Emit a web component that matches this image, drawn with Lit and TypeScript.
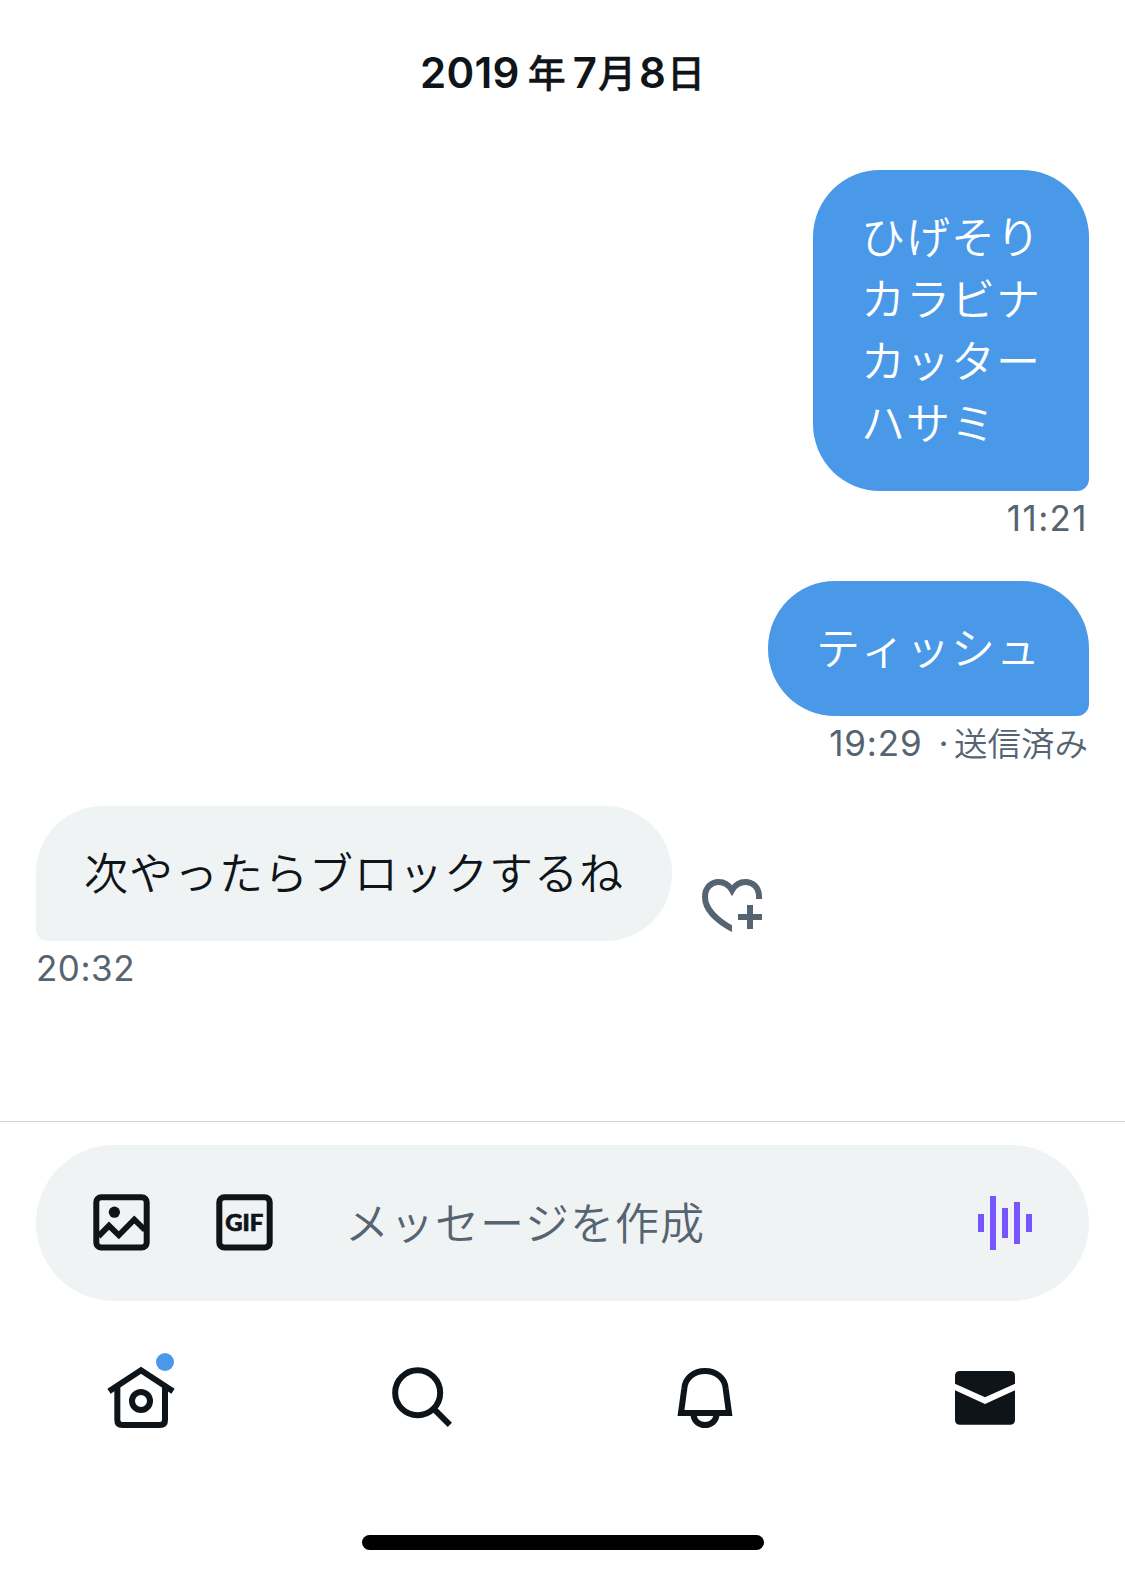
import { LitElement, html, css, svg } from "lit";
import { customElement } from "lit/decorators.js";

const imageIcon = html`<svg class="icon57" viewBox="0 0 57 57" fill="none">
  <rect x="3.3" y="3.2" width="50.4" height="50.4" rx="5" stroke="#0f1419" stroke-width="6" />
  <path d="M5.4 42.4L16 31.6L25.8 41.2L41.3 25.5L52 36" stroke="#0f1419" stroke-width="5.8" />
  <circle cx="21.4" cy="18.2" r="5.6" fill="#0f1419" />
</svg>`;

const gifIcon = html`<svg class="icon57" viewBox="0 0 57 57" fill="none">
  <rect x="3.3" y="3.2" width="50.4" height="50.4" rx="5" stroke="#0f1419" stroke-width="6" />
  <text class="gif" x="9.3" y="36.7" textLength="38" lengthAdjust="spacingAndGlyphs">GIF</text>
</svg>`;

const voiceIcon = html`<svg class="voice" viewBox="0 0 54 54" fill="#7856ff">
  <rect x="0" y="18" width="6" height="18" />
  <rect x="12" y="0" width="6" height="54" />
  <rect x="24" y="12" width="6" height="30" />
  <rect x="36" y="6" width="6" height="42" />
  <rect x="48" y="18" width="6" height="18" />
</svg>`;

const heartIcon = html`<svg class="heart" viewBox="0 0 61 54" fill="none">
  <clipPath id="heart-clip"><path d="M0 0H61V20H30V54H0Z" /></clipPath>
  <path clip-path="url(#heart-clip)" stroke="#566370" stroke-width="6"
    d="M57 22V17.5C57 8 50.5 3 43.5 3C38 3 33 6 30 11.2C27 6 22 3 16.500 3C9.500 3 3 8.500 3 18C3 29 13 41 33 51.300" />
  <path fill="#566370" d="M45 26h6v9h9v6h-9v9h-6v-9h-9v-6h9z" />
</svg>`;

const navShapes = [
  svg`<g fill="none" stroke="#0f1419" stroke-width="18">
      <path d="M57 153.500L153 91L249 153.500" />
      <path d="M82 138V240Q82 255 97 255H210Q225 255 225 240V138" />
      <circle cx="153" cy="183" r="27" />
    </g><circle cx="225" cy="66" r="27" fill="#4a99e9" />`,
  svg`<g fill="none" stroke="#0f1419" stroke-width="18">
      <circle cx="140" cy="158" r="67.500" />
      <path d="M187 205L236.500 254.500" />
    </g>`,
  svg`<g fill="none" stroke="#0f1419" stroke-width="18">
      <path d="M87 219L97 145C100 112 127 93 159 93C191 93 218 112 221 145L231 219Z" />
      <path d="M124.500 226C128 245 142 255 159 255C176 255 190 245 193.500 226" />
    </g>`,
  svg`<path fill="#0f1419" d="M81 93H231Q246 93 246 108V131L156 172L66 131V108Q66 93 81 93Z" />
    <path fill="#0f1419" d="M66 151L156 192L246 151V239Q246 254 231 254H81Q66 254 66 239Z" />`,
];

@customElement("app-root")
export class AppRoot extends LitElement {
  static styles = css`
    :host {
      display: flex;
      flex-direction: column;
      box-sizing: border-box;
      width: 1125px;
      height: 1573px;
      overflow: hidden;
      background: #fff;
      color: #0f1419;
      font-family: Inter, "Noto Sans CJK JP", sans-serif;
    }
    svg { display: block; flex: none; overflow: visible; }
    .date {
      display: flex;
      justify-content: center;
      height: 100px;
      padding-top: 43px;
      box-sizing: border-box;
      margin-bottom: 70px;
      font-size: 42px;
      line-height: 60px;
      font-weight: 600;
      white-space: nowrap;
    }
    .digits { letter-spacing: 0.3px; }
    .kanji {
      height: 60px;
      line-height: 56px;
      font-family: "Noto Sans CJK JP", sans-serif;
      font-weight: 500;
      font-size: 38px;
      -webkit-text-stroke: 0.4px #0f1419;
    }
    .kanji-year { margin: 0 7px 0 8px; }
    .kanji-month { margin: 0 3px 0 1px; }
    .kanji-day { margin-left: 1px; }
    .thread {
      display: flex;
      flex-direction: column;
      height: 951px;
      padding: 0 36px;
    }
    .message { display: flex; flex-direction: column; }
    .sent { align-items: flex-end; }
    .received { align-items: flex-start; }
    .row { display: flex; align-items: flex-end; gap: 30px; }
    .bubble {
      box-sizing: border-box;
      padding: 34px 48px 39px;
      font-family: "Noto Sans CJK JP", sans-serif;
      font-weight: 350;
      font-size: 44px;
      font-kerning: none;
      letter-spacing: 1px;
      line-height: 62px;
      white-space: pre;
    }
    .sent .bubble { background: #4a99e9; color: #fff; border-radius: 67px 67px 12px 67px; }
    .received .bubble { background: #eff3f4; border-radius: 67px 67px 67px 12px; }
    .meta {
      display: flex;
      height: 90px;
      box-sizing: border-box;
      padding-top: 3px;
      font-size: 35px;
      line-height: 48px;
      letter-spacing: 0.5px;
      color: #566370;
      white-space: pre;
    }
    .wide { letter-spacing: 1.4px; }
    .medium { letter-spacing: 0.8px; }
    .sent .meta { padding-right: 1px; }
    .status {
      font-family: "Noto Sans CJK JP", sans-serif;
      font-weight: 350;
      font-size: 33.5px;
      line-height: 46px;
      letter-spacing: 0;
    }
    .dot { margin: 0 5px 0 16px; }
    .heart { width: 61px; height: 54px; margin-bottom: 8px; }
    .composer-area { border-top: 1px solid #cbd6db; padding: 23px 36px 0; }
    .composer {
      display: flex;
      align-items: center;
      box-sizing: border-box;
      height: 156px;
      border-radius: 78px;
      background: #eff3f4;
      padding: 0 57px;
    }
    .icon57 { width: 57px; height: 57px; margin: 0 66px 2px 0; }
    .gif {
      font-family: Lato, sans-serif;
      font-weight: 900;
      font-size: 23.5px;
      fill: #0f1419;
      stroke: #0f1419;
      stroke-width: 0.7px;
    }
    .placeholder {
      flex: 1;
      margin: 0 0 4px 6px;
      font-family: "Noto Sans CJK JP", sans-serif;
      font-weight: 350;
      font-size: 44px;
      font-kerning: none;
      letter-spacing: 1px;
      line-height: 62px;
      color: #566370;
    }
    .voice { width: 54px; height: 54px; }
    .nav { display: flex; gap: 181px; padding: 39px 0 0 90px; }
    .nav-icon { width: 100px; height: 100px; }
    .home-bar {
      align-self: center;
      width: 402px;
      height: 15px;
      margin-top: 95px;
      border-radius: 8px;
      background: #000;
    }
  `;

  render() {
    return html`
      <div class="date">
        <span class="digits">2019</span><span class="kanji kanji-year">年</span><span>7</span
        ><span class="kanji kanji-month">月</span><span>8</span><span class="kanji kanji-day">日</span>
      </div>
      <div class="thread">
        <div class="message sent">
          <div class="bubble">${"ひげそり\nカラビナ\nカッター\nハサミ"}</div>
          <div class="meta"><span class="wide">11:21</span></div>
        </div>
        <div class="message sent">
          <div class="bubble">ティッシュ</div>
          <div class="meta"><span class="medium">19:29</span><span class="dot">·</span><span class="status">送信済み</span></div>
        </div>
        <div class="message received">
          <div class="row"><div class="bubble">次やったらブロックするね</div>${heartIcon}</div>
          <div class="meta">20:32</div>
        </div>
      </div>
      <div class="composer-area">
        <div class="composer">
          ${imageIcon}${gifIcon}
          <div class="placeholder">メッセージを作成</div>
          ${voiceIcon}
        </div>
      </div>
      <div class="nav">
        ${navShapes.map((s) => html`<svg class="nav-icon" viewBox="0 0 300 300">${s}</svg>`)}
      </div>
      <div class="home-bar"></div>
    `;
  }
}
